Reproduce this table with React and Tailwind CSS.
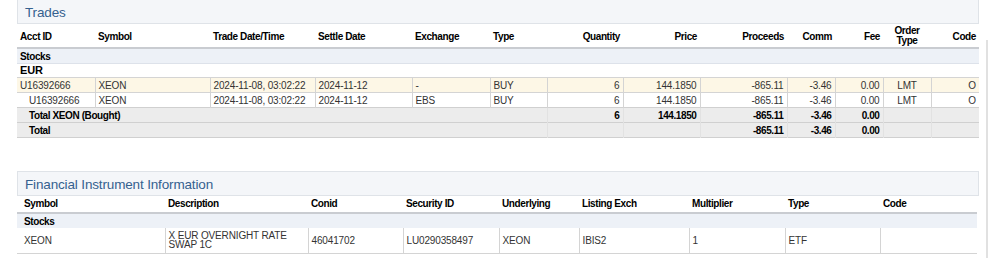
import React from "react";

const trades = [
  { acct: "U16392666", sym: "XEON", dt: "2024-11-08, 03:02:22", settle: "2024-11-12", exch: "-", type: "BUY", qty: "6", price: "144.1850", proceeds: "-865.11", comm: "-3.46", fee: "0.00", ot: "LMT", code: "O", bg: "bg-[#fdf7e6]", indent: false },
  { acct: "U16392666", sym: "XEON", dt: "2024-11-08, 03:02:22", settle: "2024-11-12", exch: "EBS", type: "BUY", qty: "6", price: "144.1850", proceeds: "-865.11", comm: "-3.46", fee: "0.00", ot: "LMT", code: "O", bg: "bg-white", indent: true },
];

const td = "border-r border-[#d4d4d4] px-[3px] py-0 whitespace-nowrap";
const th = "px-[3px] align-middle font-bold tracking-[-0.4px] text-black leading-[10px]";

const TitleBox = ({ title, className }) => (
  <div className={`h-[25px] border border-[#dfe3e8] bg-[#f4f6f9] pl-[7px] flex items-center ${className}`}>
    <span className="text-[13.5px] text-[#35618f] leading-none mt-[2px]">{title}</span>
  </div>
);

export default function App() {
  return (
    <div className="flex h-[258px] bg-white font-['Liberation_Sans',Arial,sans-serif] text-[10px] tracking-[-0.15px] text-[#333]">
      <div className="w-[962px] ml-[17px]">
        <TitleBox title="Trades" className="-mt-[1px]" />
        <table className="w-[962px] table-fixed border-collapse">
          <colgroup>
            <col className="w-[78px]" />
            <col className="w-[115px]" />
            <col className="w-[105px]" />
            <col className="w-[97px]" />
            <col className="w-[78px]" />
            <col className="w-[57px]" />
            <col className="w-[76px]" />
            <col className="w-[77px]" />
            <col className="w-[87px]" />
            <col className="w-[48px]" />
            <col className="w-[48px]" />
            <col className="w-[48px]" />
            <col className="w-[48px]" />
          </colgroup>
          <thead>
            <tr className="h-[24px] border-b-2 border-[#c9ccd1]">
              <th className={`${th} text-left pt-[2px]`}>Acct ID</th>
              <th className={`${th} text-left pt-[2px]`}>Symbol</th>
              <th className={`${th} text-left pt-[2px]`}>Trade Date/Time</th>
              <th className={`${th} text-left pt-[2px]`}>Settle Date</th>
              <th className={`${th} text-left pt-[2px]`}>Exchange</th>
              <th className={`${th} text-left pt-[2px]`}>Type</th>
              <th className={`${th} text-right pt-[2px]`}>Quantity</th>
              <th className={`${th} text-right pt-[2px]`}>Price</th>
              <th className={`${th} text-right pt-[2px]`}>Proceeds</th>
              <th className={`${th} text-right pt-[2px]`}>Comm</th>
              <th className={`${th} text-right pt-[2px]`}>Fee</th>
              <th className={`${th} text-center`}>Order<br />Type</th>
              <th className={`${th} text-right pt-[2px]`}>Code</th>
            </tr>
          </thead>
          <tbody className="leading-[13px]">
            <tr className="h-[15px] bg-[#edf1f7] border-b border-[#dde2ea]">
              <td colSpan={13} className="px-[3px] pt-[1px] font-bold text-black tracking-[-0.4px]">Stocks</td>
            </tr>
            <tr className="h-[14px] bg-white">
              <td colSpan={13} className="px-[3px] font-bold text-black tracking-[-0.2px] text-[11px]">EUR</td>
            </tr>
            {trades.map((t, i) => (
              <tr key={i} className={`h-[15px] ${t.bg} border-t border-[#d4d4d4]`}>
                <td className={`${td} ${t.indent ? "pl-[12px]" : ""}`}>{t.acct}</td>
                <td className={td}>{t.sym}</td>
                <td className={td}>{t.dt}</td>
                <td className={td}>{t.settle}</td>
                <td className={td}>{t.exch}</td>
                <td className={td}>{t.type}</td>
                <td className={`${td} text-right`}>{t.qty}</td>
                <td className={`${td} text-right`}>{t.price}</td>
                <td className={`${td} text-right`}>{t.proceeds}</td>
                <td className={`${td} text-right`}>{t.comm}</td>
                <td className={`${td} text-right`}>{t.fee}</td>
                <td className={`${td} text-center`}>{t.ot}</td>
                <td className={`${td} text-right border-r-0`}>{t.code}</td>
              </tr>
            ))}
            {[
              { label: "Total XEON (Bought)", qty: "6", price: "144.1850" },
              { label: "Total", qty: "", price: "" },
            ].map((r) => (
              <tr key={r.label} className="h-[15px] bg-[#ececec] border-t border-[#d0d0d0] border-b font-bold text-black tracking-[-0.4px]">
                <td colSpan={6} className="pl-[12px] border-r border-[#e2e2e2]">{r.label}</td>
                <td className="px-[3px] text-right border-r border-[#e2e2e2]">{r.qty}</td>
                <td className="px-[3px] text-right border-r border-[#e2e2e2]">{r.price}</td>
                <td className="px-[3px] text-right border-r border-[#e2e2e2]">-865.11</td>
                <td className="px-[3px] text-right border-r border-[#e2e2e2]">-3.46</td>
                <td className="px-[3px] text-right border-r border-[#e2e2e2]">0.00</td>
                <td className="border-r border-[#e2e2e2]"></td>
                <td></td>
              </tr>
            ))}
          </tbody>
        </table>

        <TitleBox title="Financial Instrument Information" className="mt-[33px]" />
        <table className="w-[960px] table-fixed border-collapse">
          <colgroup>
            <col className="w-[148px]" />
            <col className="w-[143px]" />
            <col className="w-[95px]" />
            <col className="w-[96px]" />
            <col className="w-[80px]" />
            <col className="w-[110px]" />
            <col className="w-[96px]" />
            <col className="w-[95px]" />
            <col className="w-[97px]" />
          </colgroup>
          <thead>
            <tr className="h-[17px] border-b-2 border-[#c9ccd1]">
              {["Symbol", "Description", "Conid", "Security ID", "Underlying", "Listing Exch", "Multiplier", "Type", "Code"].map((h, i) => (
                <th key={h} className={`${th} text-left ${i === 0 ? "pl-[7px]" : ""}`}>{h}</th>
              ))}
            </tr>
          </thead>
          <tbody>
            <tr className="h-[15px] bg-[#edf1f7] leading-[13px]">
              <td colSpan={9} className="pl-[7px] font-bold text-black tracking-[-0.4px]">Stocks</td>
            </tr>
            <tr className="h-[25px] bg-white border-b border-[#d4d4d4]">
              {["XEON", "X EUR OVERNIGHT RATE SWAP 1C", "46041702", "LU0290358497", "XEON", "IBIS2", "1", "ETF", ""].map((v, i) => (
                <td key={i} className={`px-[3px] leading-[9px] border-[#d4d4d4] ${i === 0 ? "pl-[7px]" : ""} ${i < 8 ? "border-r" : ""}`}>
                  {v}
                </td>
              ))}
            </tr>
          </tbody>
        </table>
      </div>
      <div className="ml-[7px] mt-[40px] w-[3px] border-l-2 border-[#e1e1e1]"></div>
    </div>
  );
}
